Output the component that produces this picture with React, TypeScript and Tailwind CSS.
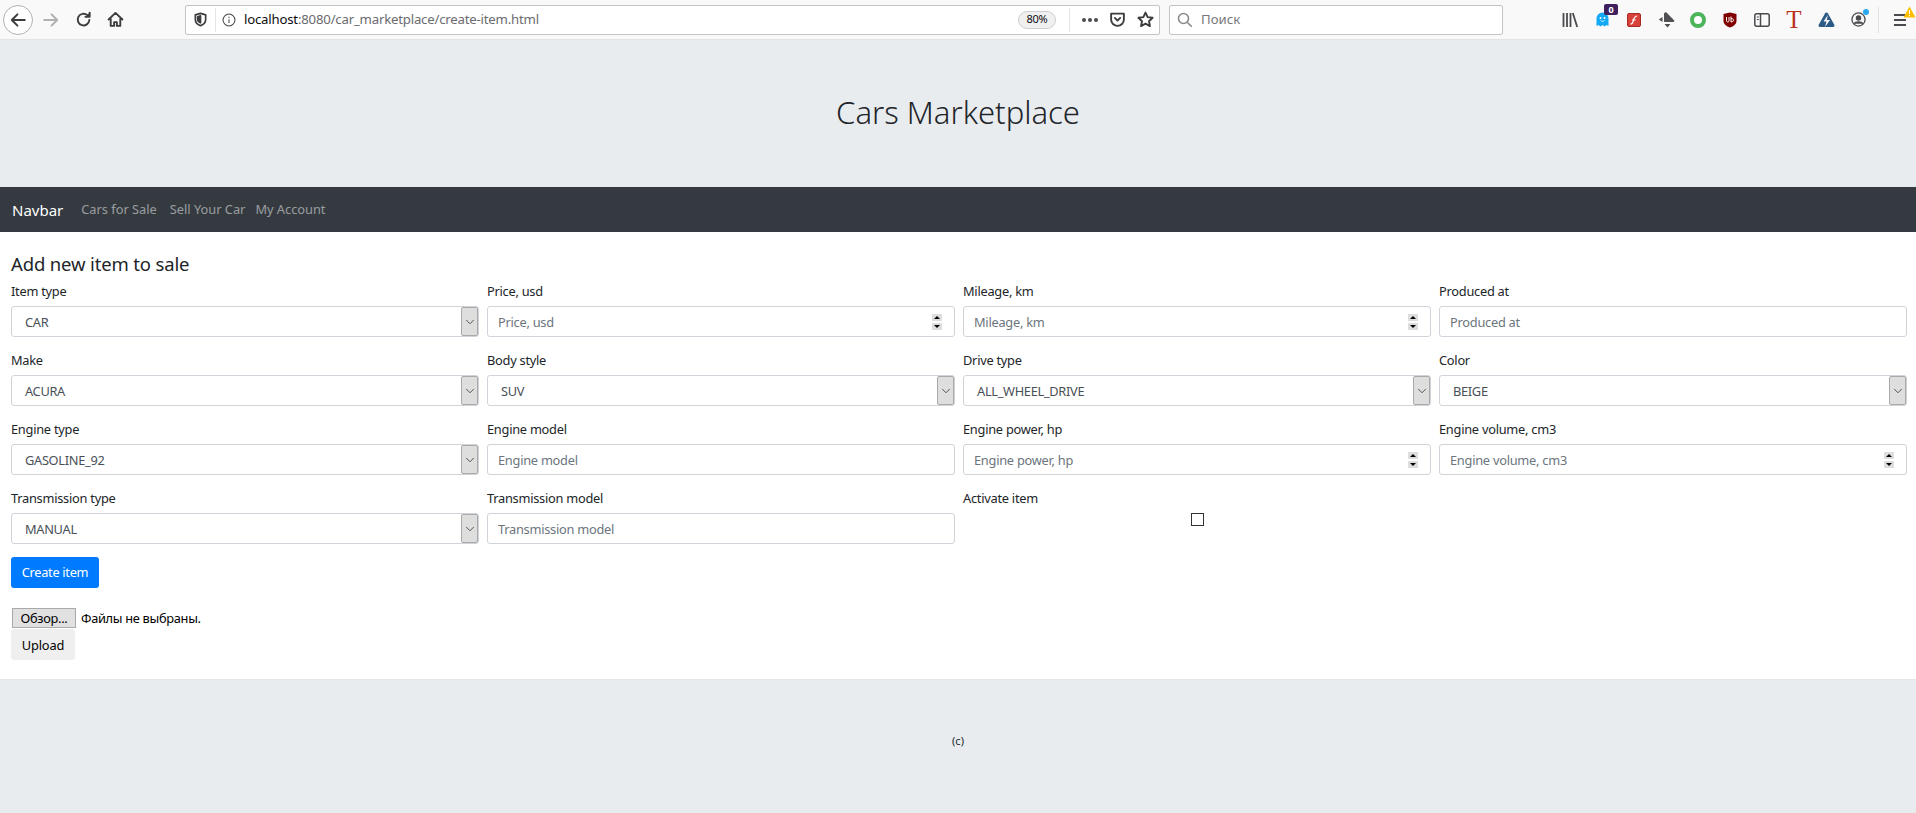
import { ChevronDown } from 'lucide-react'

const font = 'font-["Noto_Sans","Open_Sans",sans-serif]'

function Toolbtn({ children }: { children: React.ReactNode }) {
  return <div className="flex h-[18px] w-[32px] items-center justify-center">{children}</div>
}

function Ext({ children }: { children: React.ReactNode }) {
  return <div className="relative flex w-[32px] items-center justify-center">{children}</div>
}

const stroke = { fill: 'none', stroke: '#3d3d40', strokeWidth: 1.8, strokeLinecap: 'round' as const, strokeLinejoin: 'round' as const }

function BrowserBar() {
  return (
    <div className="flex h-[40px] items-center border-b border-[#e3e3e4] bg-[#f9f9fa] pl-[3px] pr-[6px]">
      <div className="flex h-[30px] w-[30px] items-center justify-center rounded-full border border-[#b1b1b3] bg-white">
        <svg width="18" height="18" viewBox="0 0 16 16" {...stroke}><path d="M14 8H2.5M7.5 3 2.5 8l5 5" /></svg>
      </div>
      <div className="ml-[2px] flex items-center">
        <Toolbtn><svg width="18" height="18" viewBox="0 0 16 16" {...stroke} stroke="#b1b1b3"><path d="M2 8h11.5M8.5 3l5 5-5 5" /></svg></Toolbtn>
        <Toolbtn><svg width="17" height="17" viewBox="0 0 16 16" {...stroke}><path d="M13.5 8.5A5.5 5.5 0 1 1 11.5 3.8" /><path d="M13.8 1.5v4h-4" fill="#3d3d40" /></svg></Toolbtn>
        <Toolbtn><svg width="17" height="17" viewBox="0 0 16 16" {...stroke}><path d="M1.5 8 8 1.8 14.5 8M3.5 7v7h3.2v-3.5h2.6V14h3.2V7" /></svg></Toolbtn>
      </div>
      <div className="ml-[54px] flex h-[30px] w-[975px] items-center rounded-[2px] border border-[#c4c4c6] bg-white">
        <svg className="ml-[7px]" width="15" height="15" viewBox="0 0 16 16" {...stroke}><path d="M8 1.500 2.500 3v5c0 3 2.500 5.500 5.500 6.500 3-1 5.500-3.500 5.500-6.500V3Z" /><path d="M8 4 5 5v3c0 1.500 1.300 2.800 3 3.500Z" fill="#3d3d40" /></svg>
        <div className="ml-[7px] h-[24px] w-px bg-[#e3e3e4]" />
        <svg className="ml-[6px]" width="14" height="14" viewBox="0 0 16 16" fill="none" stroke="#4a4a4f" strokeWidth="1.2"><circle cx="8" cy="8" r="6.800" /><path d="M8 7v4.500M8 4.200v1.400" /></svg>
        <span className="ml-[8px] text-[13.2px] tracking-[-0.2px] text-[#6b6b70]"><span className="text-[#0c0c0d]">localhost</span>:8080/car_marketplace/create-item.html</span>
        <div className="ml-auto flex h-[18px] w-[38px] items-center justify-center rounded-full border border-[#cfcfd1] bg-[#f0f0f1] text-[11px] tracking-[-0.3px] text-[#0c0c0d]">80%</div>
        <div className="ml-[13px] h-[24px] w-px bg-[#e3e3e4]" />
        <div className="ml-[12px] flex gap-[2px]">
          <span className="h-[4px] w-[4px] rounded-full bg-[#4a4a4f]" />
          <span className="h-[4px] w-[4px] rounded-full bg-[#4a4a4f]" />
          <span className="h-[4px] w-[4px] rounded-full bg-[#4a4a4f]" />
        </div>
        <svg className="ml-[11px]" width="17" height="17" viewBox="0 0 16 16" {...stroke}><path d="M2 2.500h12V8a6 6 0 0 1-12 0Z" /><path d="m5.500 6.500 2.500 2.500 2.500-2.500" /></svg>
        <svg className="ml-[11px] mr-[5px]" width="17" height="17" viewBox="0 0 16 16" {...stroke}><path d="m8 1.500 2 4.300 4.700.6-3.400 3.200.9 4.600L8 11.900l-4.200 2.300.9-4.600L1.300 6.400 6 5.800Z" /></svg>
      </div>
      <div className="ml-[9px] flex h-[30px] w-[334px] items-center rounded-[2px] border border-[#c4c4c6] bg-white">
        <svg className="ml-[7px]" width="16" height="16" viewBox="0 0 16 16" fill="none" stroke="#8a8a8e" strokeWidth="1.6"><circle cx="6.500" cy="6.500" r="5" /><path d="m10.200 10.200 4.600 4.600" /></svg>
        <span className="ml-[8px] text-[13.2px] text-[#77777b]">Поиск</span>
      </div>
      <div className="ml-auto flex items-center">
        <Ext>
          <svg width="16" height="16" viewBox="0 0 16 16" fill="none" stroke="#4a4a4f" strokeWidth="1.8"><path d="M1.500 1v14M5 1v14M8.500 1v14M10.800 1l4.400 14" /></svg>
        </Ext>
        <Ext>
          <svg width="13" height="15" viewBox="0 0 13 15">
            <path d="M.5 6.500a6 6 0 0 1 12 0V14l-2-1-2 1.500-2-1.500-2 1.500-2-1.500-2 1Z" fill="#12a9f5" />
            <circle cx="4.500" cy="6" r="1" fill="#fff" />
            <circle cx="8.500" cy="6" r="1" fill="#fff" />
            <path d="M4.500 8.500c1 1 3 1 4 0" fill="none" stroke="#fff" strokeWidth=".8" />
          </svg>
          <span className="absolute -top-[8px] left-[18px] flex h-[11px] w-[14px] items-center justify-center rounded-[2px] bg-[#3f1f5c] text-[9px] font-bold leading-none text-white">0</span>
        </Ext>
        <Ext>
          <div className="flex h-[14px] w-[14px] items-center justify-center rounded-[2px] border border-[#a52a22] bg-[#d8423a]">
            <svg width="10" height="10" viewBox="0 0 10 10" fill="none" stroke="#fff" strokeWidth="1.200"><path d="M1.500 9c2.500 0 2.500-2 3-4s1-3.500 3.500-4M3 5h3.500" /></svg>
          </div>
        </Ext>
        <Ext>
          <svg width="17" height="16" viewBox="0 0 17 16" fill="#4f4f54">
            <path d="M8.500.5 16 8.200c.7.9.3 1.800-.8 1.800H6.800C6.200 10 6 9.600 6 9V2C6 .8 7.500-.3 8.500.5Z" />
            <path d="M4.500 5v5L.8 7.500Z" />
            <path d="M6.500 12h6L9.500 15.500Z" />
          </svg>
        </Ext>
        <Ext>
          <div className="h-[16px] w-[16px] rounded-full border-[4px] border-[#4cb45b] bg-white" />
        </Ext>
        <Ext>
          <svg width="14" height="16" viewBox="0 0 14 16">
            <path d="M7 .5 13.500 2v7c0 3-3 5.500-6.500 6.500C3.500 14.500.5 12 .5 9V2Z" fill="#800000" />
            <path d="M3.500 5v3.500c0 1 .6 1.500 1.300 1.500S6 9.500 6 8.500V5M8 4.500V10c1.500 0 2.500-.7 2.500-1.800S9.500 6.500 8 6.500" fill="none" stroke="#fff" strokeWidth="1" />
          </svg>
        </Ext>
        <Ext>
          <svg width="16" height="14" viewBox="0 0 16 14" fill="none" stroke="#4a4a4f" strokeWidth="1.500"><rect x=".8" y=".8" width="14.400" height="12.400" rx="2" /><path d="M6.500 1v12" /><path d="M2.800 4h2M2.800 6.500h2" strokeWidth="1" /></svg>
        </Ext>
        <Ext>
          <span className='text-[25px] leading-none text-[#b8321f] font-["Liberation_Serif",serif]'>T</span>
        </Ext>
        <Ext>
          <svg width="17" height="16" viewBox="0 0 17 16">
            <path d="M8.500.5c.6 0 1 .3 1.300.8l6.500 11.400c.5 1 0 2.300-1.300 2.300H2c-1.300 0-1.800-1.300-1.300-2.300L7.200 1.300C7.500.8 7.900.5 8.500.5Z" fill="#2c5a85" />
            <path d="M9.800 3 5.500 9.500h3L7 15l5-7H8.800Z" fill="#f9f9fa" />
          </svg>
        </Ext>
        <Ext>
          <svg width="15" height="15" viewBox="0 0 16 16" fill="none" stroke="#4a4a4f" strokeWidth="1.400"><circle cx="8" cy="8" r="7" /><circle cx="8" cy="6.300" r="2.200" fill="#4a4a4f" /><path d="M3.500 12.500c1-2.500 8-2.500 9 0" fill="#4a4a4f" /></svg>
          <span className="absolute -top-[3px] right-[5px] h-[6px] w-[6px] rounded-full bg-[#2aa9f0]" />
        </Ext>
        <div className="ml-[4px] h-[26px] w-px bg-[#e3e3e4]" />
        <div className="relative ml-[15px] mr-[4px] flex w-[12px] flex-col gap-[3px]">
          <span className="h-[2px] bg-[#4a4a4f]" />
          <span className="h-[2px] bg-[#4a4a4f]" />
          <span className="h-[2px] bg-[#4a4a4f]" />
          <svg className="absolute -right-[10px] -top-[8px]" width="13" height="12" viewBox="0 0 13 12"><path d="M6.500.5 12.500 11.500H.5Z" fill="#ffbf00" /><path d="M6.500 4v4M6.500 9v1.200" stroke="#fff" strokeWidth="1" /></svg>
        </div>
      </div>
    </div>
  )
}

function Field({ label, children }: { label: string; children: React.ReactNode }) {
  return (
    <div className="mb-[14px]">
      <label className="mb-[5px] block h-[19px] text-[12.8px] leading-[19px] tracking-[-0.25px] text-[#212529]">{label}</label>
      {children}
    </div>
  )
}

function SelectBox({ value }: { value: string }) {
  return (
    <div className="flex h-[31px] items-center rounded-[3px] border border-[#ced4da] bg-white pl-[13px] text-[12.8px] tracking-[-0.3px] text-[#495057]">
      <span className="pt-[2px]">{value}</span>
      <span className="ml-auto flex h-[29px] w-[17px] items-center justify-center rounded-[2px] border border-[#a9a9a9] bg-[#dedede]">
        <ChevronDown size={14} strokeWidth={1.4} className="text-[#333]" />
      </span>
    </div>
  )
}

function TextBox({ placeholder, number }: { placeholder: string; number?: boolean }) {
  return (
    <div className="flex h-[31px] items-center rounded-[3px] border border-[#ced4da] bg-white pl-[10px] pr-[12px]">
      <input
        readOnly
        placeholder={placeholder}
        className="min-w-0 flex-1 bg-transparent pt-[2px] text-[12.8px] tracking-[-0.25px] text-[#495057] outline-none placeholder:text-[#6c757d]"
      />
      {number && (
        <span className="flex h-[16px] w-[10px] flex-col justify-between bg-white">
          <span className="flex h-[7px] items-center justify-center bg-[#dedede]"><span className="h-0 w-0 border-x-[3px] border-b-[3px] border-x-transparent border-b-black" /></span>
          <span className="flex h-[7px] items-center justify-center bg-[#dedede]"><span className="h-0 w-0 border-x-[3px] border-t-[3px] border-x-transparent border-t-black" /></span>
        </span>
      )}
    </div>
  )
}

export default function App() {
  return (
    <div className={`${font} min-h-[813px] bg-white`}>
      <BrowserBar />
      <div className="flex h-[147px] items-center justify-center bg-[#e9ecef] pb-[4px]">
        <h1 className="text-[31px] font-light leading-[38px] text-[#212529]">Cars Marketplace</h1>
      </div>
      <nav className="flex h-[45px] items-center bg-[#343a40] pl-[12px] pt-[1px]">
        <a className="mr-[18px] text-[15px] text-white">Navbar</a>
        <a className="mr-[13px] text-[12.8px] text-white/50">Cars for Sale</a>
        <a className="mr-[10px] text-[12.8px] text-white/50">Sell Your Car</a>
        <a className="text-[12.8px] text-white/50">My Account</a>
      </nav>
      <main className="h-[448px] border-b border-[#e5e5e5] pl-[11px] pr-[9px] pt-[20px]">
        <h4 className="mb-[7px] text-[18.5px] leading-[23px] tracking-[-0.15px] text-[#212529]">Add new item to sale</h4>
        <div className="grid grid-cols-4 gap-x-[8px]">
          <Field label="Item type"><SelectBox value="CAR" /></Field>
          <Field label="Price, usd"><TextBox placeholder="Price, usd" number /></Field>
          <Field label="Mileage, km"><TextBox placeholder="Mileage, km" number /></Field>
          <Field label="Produced at"><TextBox placeholder="Produced at" /></Field>
          <Field label="Make"><SelectBox value="ACURA" /></Field>
          <Field label="Body style"><SelectBox value="SUV" /></Field>
          <Field label="Drive type"><SelectBox value="ALL_WHEEL_DRIVE" /></Field>
          <Field label="Color"><SelectBox value="BEIGE" /></Field>
          <Field label="Engine type"><SelectBox value="GASOLINE_92" /></Field>
          <Field label="Engine model"><TextBox placeholder="Engine model" /></Field>
          <Field label="Engine power, hp"><TextBox placeholder="Engine power, hp" number /></Field>
          <Field label="Engine volume, cm3"><TextBox placeholder="Engine volume, cm3" number /></Field>
          <Field label="Transmission type"><SelectBox value="MANUAL" /></Field>
          <Field label="Transmission model"><TextBox placeholder="Transmission model" /></Field>
          <Field label="Activate item">
            <div className="flex h-[31px] items-start justify-center">
              <span className="h-[13px] w-[13px] border border-[#333] bg-white" />
            </div>
          </Field>
        </div>
        <button className="mt-[-1px] h-[31px] w-[88px] rounded-[3px] bg-[#007bff] text-[12.8px] tracking-[-0.3px] text-white">Create item</button>
        <div className="mt-[20px] flex items-center pl-[1px]">
          <span className="flex h-[20px] w-[64px] items-center justify-center border border-[#a9a9a9] bg-[#e1e1e1] pt-[1px] text-[12.8px] tracking-[-0.3px] text-black">Обзор...</span>
          <span className="ml-[5px] pt-[1px] text-[12.8px] tracking-[-0.3px] text-black">Файлы не выбраны.</span>
        </div>
        <button className="mt-[1px] block h-[31px] w-[64px] rounded-[3px] bg-[#efefef] pt-[1px] text-[12.8px] tracking-[-0.1px] text-black">Upload</button>
      </main>
      <footer className="flex h-[133px] items-center justify-center bg-[#e9ecef] pb-[10px] text-[11px] text-[#212529]">(c)</footer>
    </div>
  )
}
